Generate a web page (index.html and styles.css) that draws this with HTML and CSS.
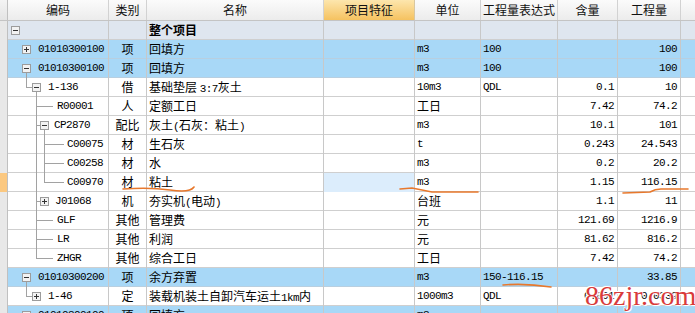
FILE: index.html
```html
<!DOCTYPE html>
<html lang="zh">
<head>
<meta charset="utf-8">
<title>工程量</title>
<link rel="stylesheet" href="styles.css">
</head>
<body>
<div class="grid">
  <div class="row head">
    <div class="c g"></div>
    <div class="c">编码</div>
    <div class="c">类别</div>
    <div class="c">名称</div>
    <div class="c feat">项目特征</div>
    <div class="c">单位</div>
    <div class="c">工程量表达式</div>
    <div class="c">含量</div>
    <div class="c">工程量</div>
    <div class="c last"></div>
  </div>

  <div class="row top">
    <div class="c g"></div>
    <div class="c code"><svg class="tr" width="20" height="19" viewBox="0 0 20 19"><rect class="bx" x="3.5" y="5.5" width="8" height="8"/><path class="sg" d="M5 9.5h5"/></svg></div>
    <div class="c kind"></div>
    <div class="c name bold">整个项目</div>
    <div class="c"></div><div class="c"></div><div class="c"></div><div class="c"></div><div class="c"></div><div class="c last"></div>
  </div>

  <div class="row blue">
    <div class="c g"></div>
    <div class="c code"><svg class="tr" width="30" height="19" viewBox="0 0 30 19"><rect class="bx" x="14.5" y="5.5" width="8" height="8"/><path class="sg" d="M16 9.5h5M18.5 7v5"/></svg><span class="a">01010300100</span></div>
    <div class="c kind">项</div>
    <div class="c name">回填方</div>
    <div class="c"></div>
    <div class="c unit a">m3</div>
    <div class="c expr a">100</div>
    <div class="c num a"></div>
    <div class="c num a">100</div>
    <div class="c last"></div>
  </div>

  <div class="row blue">
    <div class="c g"></div>
    <div class="c code"><svg class="tr" width="30" height="19" viewBox="0 0 30 19"><path class="ln" d="M18.5 14V19"/><rect class="bx" x="14.5" y="5.5" width="8" height="8"/><path class="sg" d="M16 9.5h5"/></svg><span class="a">01010300100</span></div>
    <div class="c kind">项</div>
    <div class="c name">回填方</div>
    <div class="c"></div>
    <div class="c unit a">m3</div>
    <div class="c expr a">100</div>
    <div class="c num a"></div>
    <div class="c num a">100</div>
    <div class="c last"></div>
  </div>

  <div class="row">
    <div class="c g"></div>
    <div class="c code"><svg class="tr" width="40" height="19" viewBox="0 0 40 19"><path class="ln" d="M18.5 0V9.5M18 9.5H24M28.5 14V19"/><rect class="bx" x="24.5" y="5.5" width="8" height="8"/><path class="sg" d="M26 9.5h5"/></svg><span class="a">1-136</span></div>
    <div class="c kind">借</div>
    <div class="c name">基础垫层 <span class="a">3:7</span>灰土</div>
    <div class="c"></div>
    <div class="c unit a">10m3</div>
    <div class="c expr a">QDL</div>
    <div class="c num a">0.1</div>
    <div class="c num a">10</div>
    <div class="c last"></div>
  </div>

  <div class="row">
    <div class="c g"></div>
    <div class="c code"><svg class="tr" width="49" height="19" viewBox="0 0 49 19"><path class="ln" d="M28.5 0V19M29 9.5H45"/></svg><span class="a">R00001</span></div>
    <div class="c kind">人</div>
    <div class="c name">定额工日</div>
    <div class="c"></div>
    <div class="c unit">工日</div>
    <div class="c expr a"></div>
    <div class="c num a">7.42</div>
    <div class="c num a">74.2</div>
    <div class="c last"></div>
  </div>

  <div class="row">
    <div class="c g"></div>
    <div class="c code"><svg class="tr" width="46" height="19" viewBox="0 0 46 19"><path class="ln" d="M28.5 0V19M29 9.5H32M36.5 14V19"/><rect class="bx" x="32.5" y="5.5" width="8" height="8"/><path class="sg" d="M34 9.5h5"/></svg><span class="a">CP2870</span></div>
    <div class="c kind">配比</div>
    <div class="c name">灰土<span class="a">(</span>石灰：粘土<span class="a">)</span></div>
    <div class="c"></div>
    <div class="c unit a">m3</div>
    <div class="c expr a"></div>
    <div class="c num a">10.1</div>
    <div class="c num a">101</div>
    <div class="c last"></div>
  </div>

  <div class="row">
    <div class="c g"></div>
    <div class="c code"><svg class="tr" width="59" height="19" viewBox="0 0 59 19"><path class="ln" d="M28.5 0V19M36.5 0V19M37 9.5H56"/></svg><span class="a">C00075</span></div>
    <div class="c kind">材</div>
    <div class="c name">生石灰</div>
    <div class="c"></div>
    <div class="c unit a">t</div>
    <div class="c expr a"></div>
    <div class="c num a">0.243</div>
    <div class="c num a">24.543</div>
    <div class="c last"></div>
  </div>

  <div class="row">
    <div class="c g"></div>
    <div class="c code"><svg class="tr" width="59" height="19" viewBox="0 0 59 19"><path class="ln" d="M28.5 0V19M36.5 0V19M37 9.5H56"/></svg><span class="a">C00258</span></div>
    <div class="c kind">材</div>
    <div class="c name">水</div>
    <div class="c"></div>
    <div class="c unit a">m3</div>
    <div class="c expr a"></div>
    <div class="c num a">0.2</div>
    <div class="c num a">20.2</div>
    <div class="c last"></div>
  </div>

  <div class="row">
    <div class="c g sel"></div>
    <div class="c code"><svg class="tr" width="59" height="19" viewBox="0 0 59 19"><path class="ln" d="M28.5 0V19M36.5 0V9.5M37 9.5H56"/></svg><span class="a">C00970</span></div>
    <div class="c kind">材</div>
    <div class="c name">粘土</div>
    <div class="c cur"></div>
    <div class="c unit a">m3</div>
    <div class="c expr a"></div>
    <div class="c num a">1.15</div>
    <div class="c num a">116.15</div>
    <div class="c last"></div>
  </div>

  <div class="row">
    <div class="c g"></div>
    <div class="c code"><svg class="tr" width="47" height="19" viewBox="0 0 47 19"><path class="ln" d="M28.5 0V19M29 9.5H32"/><rect class="bx" x="32.5" y="5.5" width="8" height="8"/><path class="sg" d="M34 9.5h5M36.5 7v5"/></svg><span class="a">J01068</span></div>
    <div class="c kind">机</div>
    <div class="c name">夯实机<span class="a">(</span>电动<span class="a">)</span></div>
    <div class="c"></div>
    <div class="c unit">台班</div>
    <div class="c expr a"></div>
    <div class="c num a">1.1</div>
    <div class="c num a">11</div>
    <div class="c last"></div>
  </div>

  <div class="row">
    <div class="c g"></div>
    <div class="c code"><svg class="tr" width="49" height="19" viewBox="0 0 49 19"><path class="ln" d="M28.5 0V19M29 9.5H45"/></svg><span class="a">GLF</span></div>
    <div class="c kind">其他</div>
    <div class="c name">管理费</div>
    <div class="c"></div>
    <div class="c unit">元</div>
    <div class="c expr a"></div>
    <div class="c num a">121.69</div>
    <div class="c num a">1216.9</div>
    <div class="c last"></div>
  </div>

  <div class="row">
    <div class="c g"></div>
    <div class="c code"><svg class="tr" width="49" height="19" viewBox="0 0 49 19"><path class="ln" d="M28.5 0V19M29 9.5H45"/></svg><span class="a">LR</span></div>
    <div class="c kind">其他</div>
    <div class="c name">利润</div>
    <div class="c"></div>
    <div class="c unit">元</div>
    <div class="c expr a"></div>
    <div class="c num a">81.62</div>
    <div class="c num a">816.2</div>
    <div class="c last"></div>
  </div>

  <div class="row">
    <div class="c g"></div>
    <div class="c code"><svg class="tr" width="49" height="19" viewBox="0 0 49 19"><path class="ln" d="M28.5 0V9.5M29 9.5H45"/></svg><span class="a">ZHGR</span></div>
    <div class="c kind">其他</div>
    <div class="c name">综合工日</div>
    <div class="c"></div>
    <div class="c unit">工日</div>
    <div class="c expr a"></div>
    <div class="c num a">7.42</div>
    <div class="c num a">74.2</div>
    <div class="c last"></div>
  </div>

  <div class="row blue">
    <div class="c g"></div>
    <div class="c code"><svg class="tr" width="30" height="19" viewBox="0 0 30 19"><path class="ln" d="M18.5 14V19"/><rect class="bx" x="14.5" y="5.5" width="8" height="8"/><path class="sg" d="M16 9.5h5"/></svg><span class="a">01010300200</span></div>
    <div class="c kind">项</div>
    <div class="c name">余方弃置</div>
    <div class="c"></div>
    <div class="c unit a">m3</div>
    <div class="c expr a">150-116.15</div>
    <div class="c num a"></div>
    <div class="c num a">33.85</div>
    <div class="c last"></div>
  </div>

  <div class="row">
    <div class="c g"></div>
    <div class="c code"><svg class="tr" width="40" height="19" viewBox="0 0 40 19"><path class="ln" d="M18.5 0V9.5M19 9.5H24"/><rect class="bx" x="24.5" y="5.5" width="8" height="8"/><path class="sg" d="M26 9.5h5M28.5 7v5"/></svg><span class="a">1-46</span></div>
    <div class="c kind">定</div>
    <div class="c name">装载机装土自卸汽车运土<span class="a">1km</span>内</div>
    <div class="c"></div>
    <div class="c unit a">1000m3</div>
    <div class="c expr a">QDL</div>
    <div class="c num a">0.001</div>
    <div class="c num a">0.0339</div>
    <div class="c last"></div>
  </div>

  <div class="row blue">
    <div class="c g"></div>
    <div class="c code"><svg class="tr" width="30" height="19" viewBox="0 0 30 19"><rect class="bx" x="14.5" y="5.5" width="8" height="8"/><path class="sg" d="M16 9.5h5"/></svg><span class="a">01010300100</span></div>
    <div class="c kind">项</div>
    <div class="c name">回填方</div>
    <div class="c"></div>
    <div class="c unit a">m3</div>
    <div class="c expr a"></div>
    <div class="c num a"></div>
    <div class="c num a"></div>
    <div class="c last"></div>
  </div>
</div>

<svg class="marks" width="695" height="313" viewBox="0 0 695 313">
  <path d="M123 189 Q150 187 170 190 T194 187"/>
  <path d="M400 189 L412 188 L432 192 L478 192"/>
  <path d="M623 193 L650 192 Q655 189 661 189 L688 189"/>
  <path d="M503 285 Q525 283 551 287"/>
</svg>
<div class="wm">86zjr.com</div>
</body>
</html>
```

FILE: styles.css
```css
html, body {
  margin: 0;
  padding: 0;
}
body {
  width: 695px;
  height: 313px;
  overflow: hidden;
  background: #fff;
  font-family: "Noto Sans CJK SC", "Liberation Sans", sans-serif;
  font-size: 12px;
  color: #000;
  position: relative;
}
.grid {
  display: flex;
  flex-direction: column;
}
.row {
  display: grid;
  grid-template-columns: 8px 101px 38px 177px 91px 66px 77px 60px 63px 1fr;
  height: 19px;
  box-sizing: border-box;
  border-bottom: 1px solid #cfcfcf;
  background: #fff;
}
.row.head {
  height: 21px;
  border-bottom: 1px solid #c4c4c4;
  background: linear-gradient(#fbfbfb, #ececec);
}
.row.top { background: #dfe6ef; }
.row.blue { background: #a8d8f7; border-bottom-color: #b8cfe0; }

.c {
  box-sizing: border-box;
  border-right: 1px solid #c8c8c8;
  padding: 0 2px;
  line-height: 18px;
  white-space: nowrap;
  overflow: hidden;
}
.head .c {
  text-align: center;
  font-size: 12px;
  line-height: 20px;
  color: #111;
  padding: 0;
  border-right-color: #d2d2d2;
}
.head .feat {
  background: linear-gradient(#fde6ad, #f5c260);
  border-right-color: #d8c7a0;
}
.c.g {
  background: #e8e8e8;
  border-right-color: #c0c0c0;
  padding: 0;
}
.head .c.g { background: linear-gradient(#f4f4f4, #e4e4e4); }
.c.g.sel { background: #fbc880; }
.c.last { border-right: none; }
.c.cur { background: #dcedfc; }

.code {
  display: flex;
  align-items: flex-start;
  padding: 0;
  overflow: visible;
}
.tr {
  flex: none;
  display: block;
  overflow: visible;
}
.ln {
  stroke: #a2a2a2;
  stroke-width: 1;
  fill: none;
  shape-rendering: crispEdges;
}
.bx {
  fill: #f2f2f2;
  stroke: #9c9c9c;
  stroke-width: 1;
  shape-rendering: crispEdges;
}
.sg {
  stroke: #333;
  stroke-width: 1;
  fill: none;
  shape-rendering: crispEdges;
}
.a {
  font-family: "Liberation Mono", "DejaVu Sans Mono", monospace;
  font-size: 11px;
  letter-spacing: -0.6px;
}
.kind { text-align: center; padding: 0; }
.name { padding-left: 2px; }
.bold { font-weight: bold; }
.unit { padding-left: 2px; }
.expr { padding-left: 2px; }
.num { text-align: right; padding-right: 3px; }

.marks {
  position: absolute;
  left: 0;
  top: 0;
  pointer-events: none;
}
.marks path {
  fill: none;
  stroke: #e8782c;
  stroke-width: 1.6;
  stroke-linecap: round;
}
.wm {
  position: absolute;
  left: 585px;
  top: 281px;
  font-family: "Liberation Serif", serif;
  font-size: 28px;
  line-height: 30px;
  color: #d93b3b;
  text-shadow: 0 0 2px #fff, 0 0 2px #fff, 1px 1px 0 #fff, -1px -1px 0 #fff;
  pointer-events: none;
}
```
